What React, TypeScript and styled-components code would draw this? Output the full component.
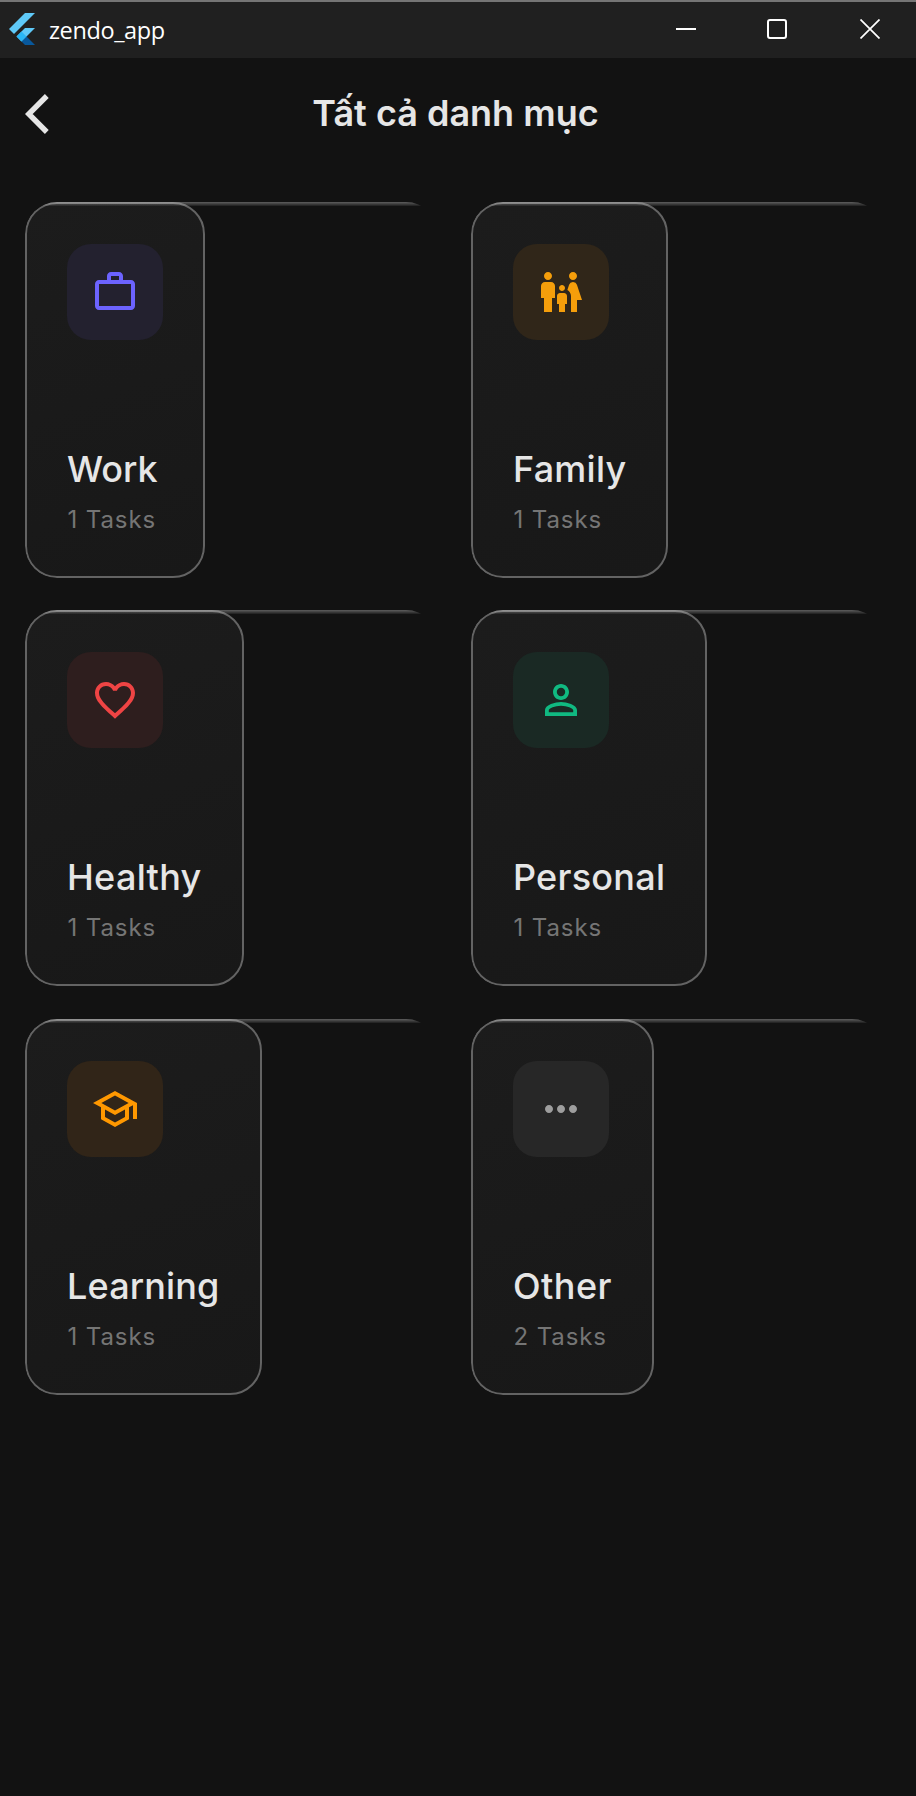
import React from "react";
import styled, { createGlobalStyle } from "styled-components";
import type { IconType } from "react-icons";
import {
  MdWorkOutline,
  MdFamilyRestroom,
  MdFavoriteBorder,
  MdPersonOutline,
  MdOutlineSchool,
  MdMoreHoriz,
} from "react-icons/md";

const GlobalStyle = createGlobalStyle`
  *, *::before, *::after { box-sizing: border-box; }
  html, body { margin: 0; background: #121212; }
  body { font-family: Inter, "Noto Sans", sans-serif; }
`;

const Window = styled.div`
  display: flex;
  flex-direction: column;
  width: 916px;
  height: 1796px;
  overflow: hidden;
  background: #121212;
  color: #e6e6e6;
`;

const TitleBar = styled.header`
  display: flex;
  align-items: center;
  height: 58px;
  border-top: 2px solid #757575;
  background: #202020;
  color: #fff;
`;

const FlutterLogo = styled.svg`
  width: 26px;
  height: 32px;
  margin: -2px 0 0 9px;
`;

const AppName = styled.span`
  flex: 1;
  margin: -1px 0 0 14px;
  font: 400 23.5px/32px "Open Sans", "Noto Sans", sans-serif;
  letter-spacing: -0.4px;
`;

const Controls = styled.div`
  display: flex;
  align-self: flex-start;
  height: 54px;
`;

const Control = styled.span<{ $width: number }>`
  display: flex;
  align-items: center;
  justify-content: center;
  width: ${(p) => p.$width}px;
`;

const Header = styled.div`
  display: grid;
  grid-template-columns: 90px 1fr 95px;
  align-items: center;
  height: 112px;
`;

const BackIcon = styled.svg`
  width: 24px;
  height: 40px;
  margin-left: 25px;
`;

const PageTitle = styled.h1`
  margin: 0 0 2px;
  text-align: center;
  font-size: 36px;
  line-height: 44px;
  font-weight: 600;
`;

const Grid = styled.main`
  display: grid;
  grid-template-columns: repeat(2, 413px);
  grid-template-rows: 376px 377px 376px;
  align-items: start;
  gap: 32px 33px;
  padding: 32px 31px 0 25px;
`;

const Cell = styled.section`
  position: relative;
  display: flex;
  align-items: stretch;
  justify-content: flex-start;
  height: 376px;
  border-radius: 32px;
  overflow: hidden;
`;

const Highlight = styled.div`
  position: absolute;
  inset: 0 0 auto;
  height: 4px;
  background: linear-gradient(rgba(255, 255, 255, 0.32), rgba(255, 255, 255, 0.05));
`;

const Card = styled.div`
  display: flex;
  flex-direction: column;
  justify-content: space-between;
  padding: 40px;
  border: 2px solid #636363;
  border-radius: 32px;
  background: linear-gradient(160deg, #1c1c1c, #181818);
`;

const IconTile = styled.div<{ $color: string; $fill: string }>`
  display: flex;
  align-items: center;
  justify-content: center;
  width: 96px;
  height: 96px;
  border-radius: 24px;
  font-size: 48px;
  color: ${(p) => p.$color};
  background: ${(p) => p.$fill};
`;

const CategoryName = styled.h2<{ $tracking: number }>`
  margin: 0;
  font-size: 36px;
  line-height: 44px;
  font-weight: 500;
  letter-spacing: ${(p) => p.$tracking}px;
`;

const TaskCount = styled.p`
  margin: 13px 0 0;
  padding-left: 0.5px;
  font-size: 24px;
  line-height: 32px;
  letter-spacing: 0.9px;
  color: #757575;
`;

interface Category {
  name: string;
  tracking: number;
  tasks: number;
  Icon: IconType;
  color: string;
  fill: string;
}

const categories: Category[] = [
  { name: "Work", tracking: 0, tasks: 1, Icon: MdWorkOutline, color: "#6c63ff", fill: "#23212f" },
  { name: "Family", tracking: 0.25, tasks: 1, Icon: MdFamilyRestroom, color: "#f59e0b", fill: "#302619" },
  { name: "Healthy", tracking: 0.3, tasks: 1, Icon: MdFavoriteBorder, color: "#ef4444", fill: "#2e1e1e" },
  { name: "Personal", tracking: 0.25, tasks: 1, Icon: MdPersonOutline, color: "#10b981", fill: "#1a2924" },
  { name: "Learning", tracking: 0.15, tasks: 1, Icon: MdOutlineSchool, color: "#ff9800", fill: "#312518" },
  { name: "Other", tracking: 0.45, tasks: 2, Icon: MdMoreHoriz, color: "#9e9e9e", fill: "#272727" },
];

export default function App() {
  return (
    <>
      <GlobalStyle />
      <Window>
        <TitleBar>
          <FlutterLogo viewBox="0 0 26 32">
            <path d="M16 0h10L5 21l-5-5z" fill="#5fc9f8" />
            <path d="M16 15h10l-8.500 8.500-5 5-5-5z" fill="#5fc9f8" />
            <path d="M12.500 28.500l5-5L26 32H16z" fill="#08589c" />
            <path d="M7.500 23.500l5-5 5 5-5 5z" fill="#29b6f6" />
          </FlutterLogo>
          <AppName>zendo_app</AppName>
          <Controls>
            <Control $width={88}>
              <svg width="20" height="20" viewBox="0 0 20 20">
                <path d="M0 10h20" stroke="#fff" strokeWidth="2" />
              </svg>
            </Control>
            <Control $width={94}>
              <svg width="20" height="20" viewBox="0 0 20 20">
                <rect x="1" y="1" width="18" height="18" rx="2" fill="none" stroke="#fff" strokeWidth="2" />
              </svg>
            </Control>
            <Control $width={92}>
              <svg width="20" height="20" viewBox="0 0 20 20">
                <path d="M0.500 0.500l19 19M19.500 0.500l-19 19" stroke="#fff" strokeWidth="1.700" />
              </svg>
            </Control>
          </Controls>
        </TitleBar>
        <Header>
          <BackIcon viewBox="0 0 24 40">
            <path d="M21.800 2L3.800 20l18 18" fill="none" stroke="#e6e6e6" strokeWidth="5.400" />
          </BackIcon>
          <PageTitle>Tất cả danh mục</PageTitle>
        </Header>
        <Grid>
          {categories.map(({ name, tracking, tasks, Icon, color, fill }) => (
            <Cell key={name}>
              <Card>
                <IconTile $color={color} $fill={fill}>
                  <Icon />
                </IconTile>
                <div>
                  <CategoryName $tracking={tracking}>{name}</CategoryName>
                  <TaskCount>{tasks} Tasks</TaskCount>
                </div>
              </Card>
              <Highlight />
            </Cell>
          ))}
        </Grid>
      </Window>
    </>
  );
}
